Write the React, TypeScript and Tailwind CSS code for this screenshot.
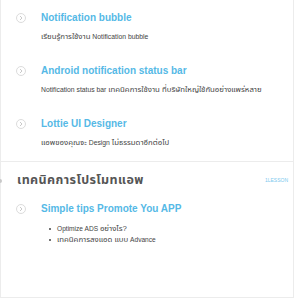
import React from "react";

function Chevron() {
  return (
    <div className="w-[10px] h-[10px] rounded-full border border-[#dcdcdc] flex items-center justify-center shrink-0">
      <svg width="6" height="6" viewBox="0 0 6 6">
        <path d="M2 1 L4 3 L2 5" fill="none" stroke="#c4c4c4" strokeWidth="0.9" />
      </svg>
    </div>
  );
}

function T({ children }: { children: React.ReactNode }) {
  return <span className="text-[7.8px]">{children}</span>;
}

function Item({ title, desc }: { title: string; desc: React.ReactNode }) {
  return (
    <div className="h-[53px] pt-[11px]">
      <div className="flex items-center h-[14px]">
        <div className="w-[15px]" />
        <Chevron />
        <div className="w-[15px]" />
        <div className="text-[10px] leading-[14px] font-bold text-[#55b9e6] whitespace-nowrap">{title}</div>
      </div>
      <div className="mt-[7px] pl-[40px] text-[6.8px] leading-[10px] h-[10px] text-[#444] whitespace-nowrap">{desc}</div>
    </div>
  );
}

export default function App() {
  return (
    <div
      className="w-[294px] h-[298px] bg-white border-x border-b border-[#ececec] relative"
      style={{ fontFamily: '"Liberation Sans", Arial, "Noto Sans Thai", "Noto Sans", sans-serif' }}
    >
      <div className="h-[162px] border-b border-[#ececec]">
        <Item title="Notification bubble" desc={<><T>เรียนรู้การใช้งาน</T>  Notification bubble</>} />
        <Item
          title="Android notification status bar"
          desc={<>Notification status bar <T>เทคนิคการใช้งาน ที่บริษัทใหญ่ใช้กันอย่างแพร่หลาย</T></>}
        />
        <Item title="Lottie UI Designer" desc={<><T>แอพของคุณจะ</T> Design <T>ไม่ธรรมดาอีกต่อไป</T></>} />
      </div>
      <div className="relative pt-[10px]">
        <div className="absolute left-[-3px] top-[17px] w-[4px] h-[4px] rounded-full bg-[#c8c8c8]" />
        <div className="flex items-center justify-between pl-[16px] pr-[5px] h-[16px]">
          <div className="text-[12.5px] leading-[16px] font-bold tracking-[0.4px] text-[#555]">เทคนิคการโปรโมทแอพ</div>
          <div className="text-[5px] leading-[8px] text-[#7cc8ee]">1LESSON</div>
        </div>
        <div className="mt-[14px] flex items-center h-[14px]">
          <div className="w-[15px]" />
          <Chevron />
          <div className="w-[15px]" />
          <div className="text-[10px] leading-[14px] font-bold text-[#55b9e6] whitespace-nowrap">
            Simple tips Promote You APP
          </div>
        </div>
        <ul className="mt-[7px] pl-[48px] text-[6.6px] leading-[11px] text-[#444]">
          <li className="flex items-center h-[11px]">
            <span className="w-[2px] h-[2px] rounded-full bg-[#444] mr-[6px]" />
            <span>Optimize ADS <T>อย่างไร?</T></span>
          </li>
          <li className="flex items-center h-[11px]">
            <span className="w-[2px] h-[2px] rounded-full bg-[#444] mr-[6px]" />
            <span><T>เทคนิคการลงแอด แบบ</T> Advance</span>
          </li>
        </ul>
      </div>
    </div>
  );
}
